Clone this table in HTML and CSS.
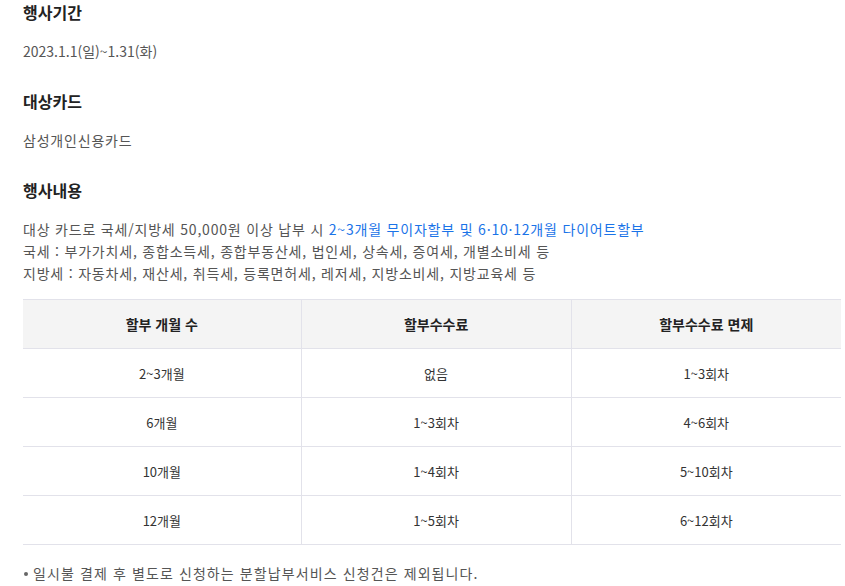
FILE: index.html
```html
<!DOCTYPE html>
<html lang="ko">
<head>
<meta charset="utf-8">
<link rel="stylesheet" href="styles.css">
</head>
<body>
<div class="page">
  <section class="sec">
    <h3 class="sec-title">행사기간</h3>
    <p class="txt txt-num">2023.1.1(일)~1.31(화)</p>
  </section>
  <section class="sec">
    <h3 class="sec-title">대상카드</h3>
    <p class="txt">삼성개인신용카드</p>
  </section>
  <section class="sec sec-last">
    <h3 class="sec-title">행사내용</h3>
    <p class="txt">대상 카드로 국세/지방세 50,000원 이상 납부 시 <span class="blue">2~3개월 무이자할부 및 6·10·12개월 다이어트할부</span><br>국세 : 부가가치세, 종합소득세, 종합부동산세, 법인세, 상속세, 증여세, 개별소비세 등<br>지방세 : 자동차세, 재산세, 취득세, 등록면허세, 레저세, 지방소비세, 지방교육세 등</p>
    <table class="tbl">
      <colgroup><col class="c1"><col class="c2"><col class="c3"></colgroup>
      <thead>
        <tr><th>할부 개월 수</th><th>할부수수료</th><th>할부수수료 면제</th></tr>
      </thead>
      <tbody>
        <tr><td>2~3개월</td><td>없음</td><td>1~3회차</td></tr>
        <tr><td>6개월</td><td>1~3회차</td><td>4~6회차</td></tr>
        <tr><td>10개월</td><td>1~4회차</td><td>5~10회차</td></tr>
        <tr><td>12개월</td><td>1~5회차</td><td>6~12회차</td></tr>
      </tbody>
    </table>
    <ul class="notes">
      <li>일시불 결제 후 별도로 신청하는 분할납부서비스 신청건은 제외됩니다.</li>
    </ul>
  </section>
</div>
</body>
</html>
```

FILE: styles.css
```css
html, body {
  margin: 0;
  padding: 0;
  background: #fff;
}
body {
  font-family: "Noto Sans CJK KR", "Noto Sans", sans-serif;
  color: #555;
  overflow: hidden;
}
.page {
  width: 818px;
  margin-left: 23px;
  padding-top: 1px;
}
.sec {
  margin-bottom: 28px;
}
.sec-last {
  margin-bottom: 0;
}
.sec-title {
  margin: 0 0 17px;
  font-size: 16px;
  line-height: 22px;
  font-weight: 700;
  color: #222;
}
.txt {
  margin: 0;
  font-size: 14px;
  line-height: 22px;
  letter-spacing: 0.8px;
  color: #555;
}
.txt-num {
  letter-spacing: 0;
}
.blue {
  color: #1a73e8;
}
.tbl {
  width: 100%;
  margin-top: 15px;
  border-collapse: collapse;
  table-layout: fixed;
  font-size: 13px;
}
.c1 { width: 34%; }
.c2 { width: 33%; }
.c3 { width: 33%; }
.tbl th,
.tbl td {
  height: 48px;
  padding: 0;
  text-align: center;
  border-top: 1px solid #e2e2ea;
  border-bottom: 1px solid #e2e2ea;
  border-left: 1px solid #e2e2ea;
}
.tbl th:first-child,
.tbl td:first-child {
  border-left: none;
}
.tbl th {
  background: #f4f4f4;
  font-size: 14px;
  font-weight: 700;
  color: #222;
}
.tbl td {
  color: #333;
}
.notes {
  list-style: none;
  margin: 17px 0 0;
  padding: 0;
  font-size: 14px;
  line-height: 22px;
  letter-spacing: 1.1px;
  color: #555;
}
.notes li {
  position: relative;
  padding-left: 10px;
}
.notes li::before {
  content: "";
  position: absolute;
  left: 1px;
  top: 10px;
  width: 4px;
  height: 4px;
  border-radius: 50%;
  background: #666;
}
```
